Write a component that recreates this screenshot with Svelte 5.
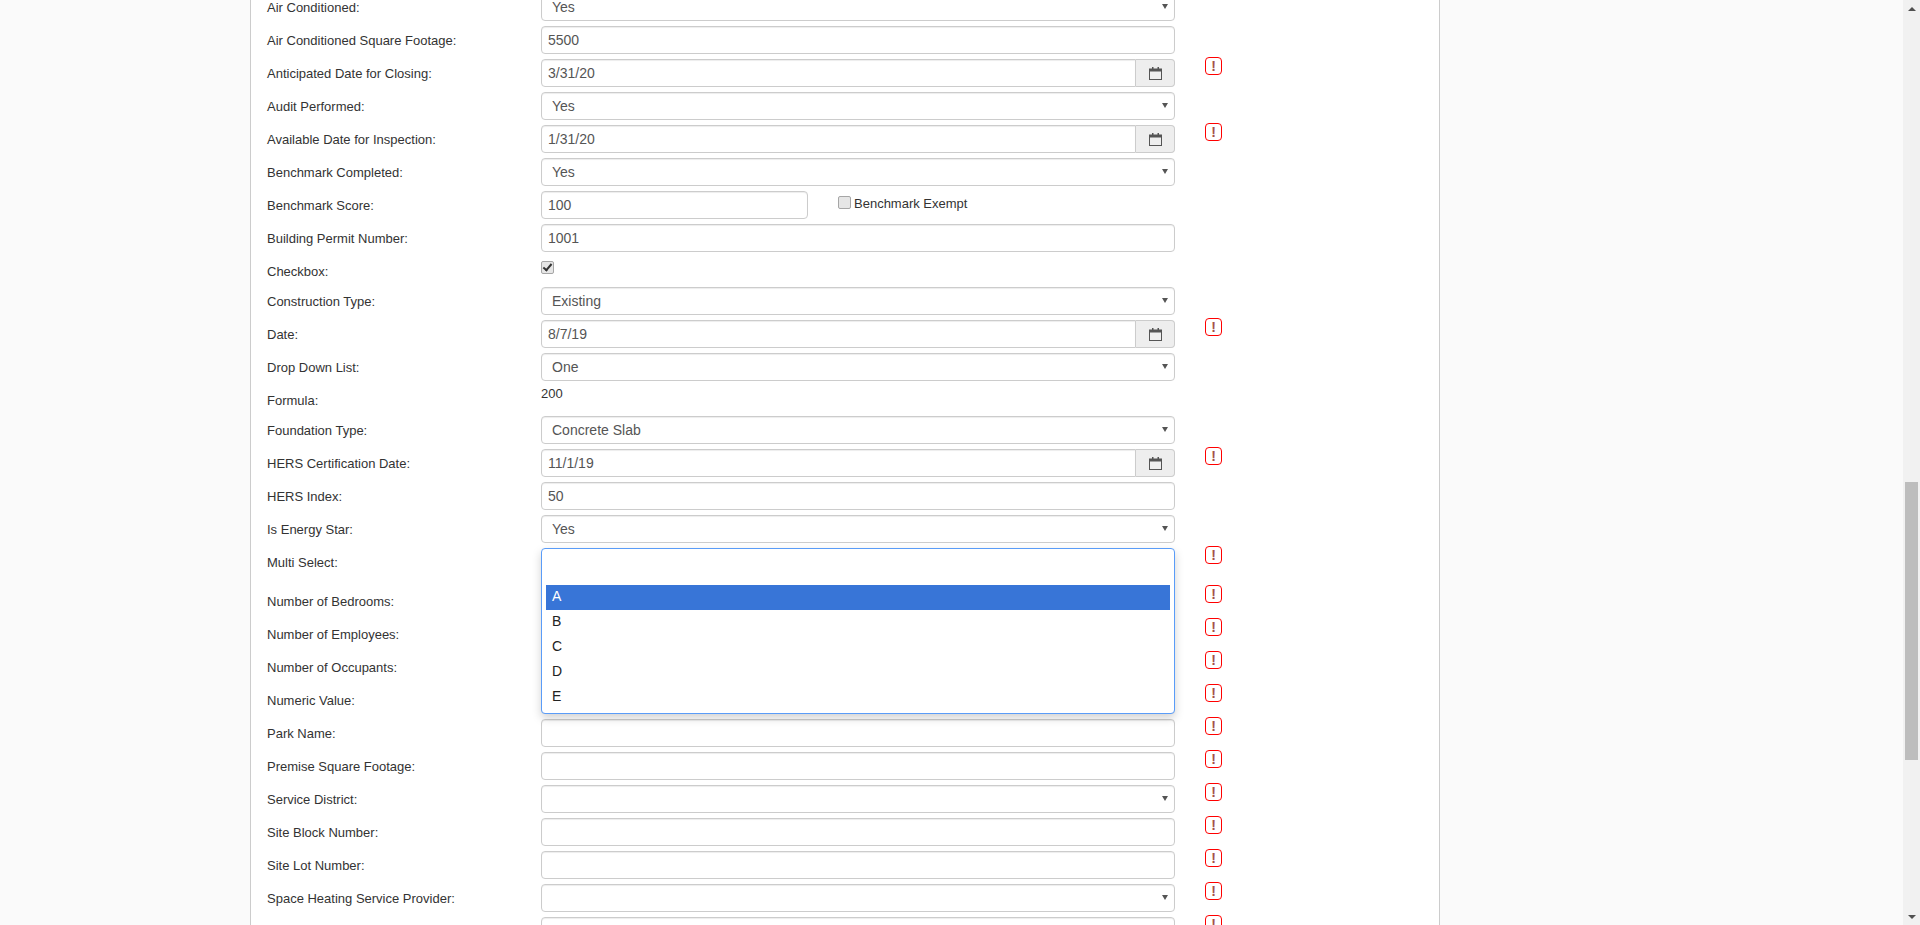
<script>
  // one entry per form row, in page order
  const rows = [
    { label: "Air Conditioned", type: "select", value: "Yes" },
    { label: "Air Conditioned Square Footage", type: "text", value: "5500" },
    { label: "Anticipated Date for Closing", type: "date", value: "3/31/20", alert: true },
    { label: "Audit Performed", type: "select", value: "Yes" },
    { label: "Available Date for Inspection", type: "date", value: "1/31/20", alert: true },
    { label: "Benchmark Completed", type: "select", value: "Yes" },
    { label: "Benchmark Score", type: "score", value: "100" },
    { label: "Building Permit Number", type: "text", value: "1001" },
    { label: "Checkbox", type: "check" },
    { label: "Construction Type", type: "select", value: "Existing" },
    { label: "Date", type: "date", value: "8/7/19", alert: true },
    { label: "Drop Down List", type: "select", value: "One" },
    { label: "Formula", type: "static", value: "200" },
    { label: "Foundation Type", type: "select", value: "Concrete Slab" },
    { label: "HERS Certification Date", type: "date", value: "11/1/19", alert: true },
    { label: "HERS Index", type: "text", value: "50" },
    { label: "Is Energy Star", type: "select", value: "Yes" },
    { label: "Multi Select", type: "multi", alert: true },
    { label: "Number of Bedrooms", type: "text", value: "", alert: true },
    { label: "Number of Employees", type: "text", value: "", alert: true },
    { label: "Number of Occupants", type: "text", value: "", alert: true },
    { label: "Numeric Value", type: "text", value: "", alert: true },
    { label: "Park Name", type: "text", value: "", alert: true },
    { label: "Premise Square Footage", type: "text", value: "", alert: true },
    { label: "Service District", type: "select", value: "", alert: true },
    { label: "Site Block Number", type: "text", value: "", alert: true },
    { label: "Site Lot Number", type: "text", value: "", alert: true },
    { label: "Space Heating Service Provider", type: "select", value: "", alert: true },
    // label of this one sits below the fold
    { label: "", type: "text", value: "", alert: true },
  ];

  const options = ["A", "B", "C", "D", "E"];
</script>

{#snippet field(value)}
  <input class="input" type="text" {value} readonly />
{/snippet}

{#snippet dropdown(value)}
  <div class="select-wrap">
    <select class="input select">
      <option>{value}</option>
    </select>
  </div>
{/snippet}

<div class="page">
  <main class="main">
    <div class="panel">
      {#each rows as row}
        <div class="row" class:short={row.type === "check" || row.type === "static"} class:tall={row.type === "multi"}>
          <div class="label">{row.label ? row.label + ":" : ""}</div>
          <div class="control">
            {#if row.type === "text"}
              {@render field(row.value)}
            {:else if row.type === "select"}
              {@render dropdown(row.value)}
            {:else if row.type === "date"}
              <div class="date-group">
                {@render field(row.value)}
                <span class="addon">
                  <svg width="13" height="13" viewBox="0 0 13 13">
                    <path d="M0 1.5h3V0h1.5v1.5h4V0H10v1.5h3V13H0z M1 4.5V12h11V4.5z" fill="#555" fill-rule="evenodd" />
                  </svg>
                </span>
              </div>
            {:else if row.type === "score"}
              <div class="score-group">
                <div class="score-input">{@render field(row.value)}</div>
                <label class="exempt"><input class="box" type="checkbox" />Benchmark Exempt</label>
              </div>
            {:else if row.type === "check"}
              <input class="box check" type="checkbox" checked />
            {:else if row.type === "static"}
              <div class="static">{row.value}</div>
            {:else if row.type === "multi"}
              <div class="listbox">
                {#each options as opt, i}
                  <div class="option" class:selected={i === 0}>{opt}</div>
                {/each}
              </div>
            {/if}
          </div>
          {#if row.alert}
            <span class="alert">!</span>
          {/if}
        </div>
      {/each}
    </div>
  </main>

  <div class="scrollbar">
    <div class="arrow up"></div>
    <div class="track"><div class="thumb"></div></div>
    <div class="arrow down"></div>
  </div>
</div>

<style>
  :global(body) {
    margin: 0;
    font-family: "Liberation Sans", Arial, sans-serif;
  }

  .page {
    display: flex;
    height: 925px;
    overflow: hidden;
    background: #fafafa;
  }

  .main {
    flex: 1;
    min-width: 0;
  }

  /* page is scrolled, so the panel starts above the fold */
  .panel {
    box-sizing: border-box;
    width: 1190px;
    margin: -7px 0 0 250px;
    padding-left: 16px;
    background: #fff;
    border-left: 1px solid #ccc;
    border-right: 1px solid #ccc;
  }

  .row {
    display: flex;
    align-items: flex-start;
    height: 28px;
    margin-bottom: 5px;
  }

  .row.short {
    height: 25px;
  }

  .row.tall {
    height: 34px;
  }

  .label {
    flex: 0 0 274px;
    padding-top: 6px;
    font-size: 13px;
    line-height: 18px;
    color: #333;
  }

  .control {
    position: relative;
    flex: 0 0 634px;
  }

  .input {
    display: block;
    box-sizing: border-box;
    width: 100%;
    height: 28px;
    padding: 0 6px;
    font: 14px "Liberation Sans", Arial, sans-serif;
    color: #555;
    background: #fff;
    border: 1px solid #ccc;
    border-radius: 4px;
    box-shadow: inset 0 1px 1px rgba(0, 0, 0, 0.075);
    outline: none;
  }

  .select-wrap {
    position: relative;
  }

  .select-wrap::after {
    content: "";
    position: absolute;
    top: 11px;
    right: 7px;
    border-left: 3.5px solid transparent;
    border-right: 3.5px solid transparent;
    border-top: 5px solid #555;
  }

  .select {
    padding-left: 10px;
    appearance: none;
  }

  .date-group {
    display: flex;
  }

  .date-group .input {
    flex: 1;
    min-width: 0;
    border-radius: 4px 0 0 4px;
  }

  .addon {
    box-sizing: border-box;
    flex: 0 0 39px;
    display: flex;
    align-items: center;
    justify-content: center;
    background: #eee;
    border: 1px solid #ccc;
    border-left: 0;
    border-radius: 0 4px 4px 0;
  }

  .score-group {
    display: flex;
  }

  .score-input {
    flex: 0 0 267px;
  }

  .exempt {
    display: flex;
    align-items: center;
    margin: 3px 0 0 30px;
    height: 18px;
    font-size: 13px;
    color: #333;
  }

  .box {
    position: relative;
    box-sizing: border-box;
    width: 13px;
    height: 13px;
    margin: -2px 3px 0 0;
    appearance: none;
    background: #e6e6e6;
    border: 1px solid #a6a6a6;
    border-radius: 2px;
  }

  .check {
    display: block;
    margin: 4px 0 0 0;
  }

  .check::after {
    content: "";
    position: absolute;
    top: 0;
    left: 3px;
    width: 3px;
    height: 7px;
    border: solid #333;
    border-width: 0 2px 2px 0;
    transform: rotate(40deg);
  }

  .static {
    font-size: 13px;
    line-height: 16px;
    color: #333;
  }

  .listbox {
    position: absolute;
    top: 0;
    left: 0;
    z-index: 2;
    box-sizing: border-box;
    width: 100%;
    height: 166px;
    padding: 36px 4px 0;
    background: #fff;
    border: 1px solid #5a9cf8;
    border-radius: 4px;
    box-shadow: 0 4px 10px rgba(0, 0, 0, 0.18);
  }

  .option {
    height: 25px;
    padding-left: 6px;
    font-size: 14px;
    line-height: 23px;
    color: #222;
  }

  .option.selected {
    color: #fff;
    background: #3875d7;
  }

  .alert {
    box-sizing: border-box;
    flex: 0 0 17px;
    height: 18px;
    margin: -2px 0 0 30px;
    font-size: 14px;
    font-weight: bold;
    line-height: 16px;
    text-align: center;
    color: #a5524a;
    border: 1px solid #f00;
    border-radius: 4px;
  }

  .scrollbar {
    flex: 0 0 17px;
    display: flex;
    flex-direction: column;
    background: #f1f1f1;
  }

  .arrow {
    flex: 0 0 17px;
    display: flex;
    justify-content: center;
    align-items: center;
  }

  .arrow::after {
    content: "";
    border-left: 4px solid transparent;
    border-right: 4px solid transparent;
  }

  .arrow.up::after {
    border-bottom: 4px solid #505050;
  }

  .arrow.down::after {
    border-top: 4px solid #505050;
  }

  .track {
    flex: 1;
    padding: 465px 2px 0;
  }

  .thumb {
    height: 278px;
    background: #bdbdbd;
  }
</style>
